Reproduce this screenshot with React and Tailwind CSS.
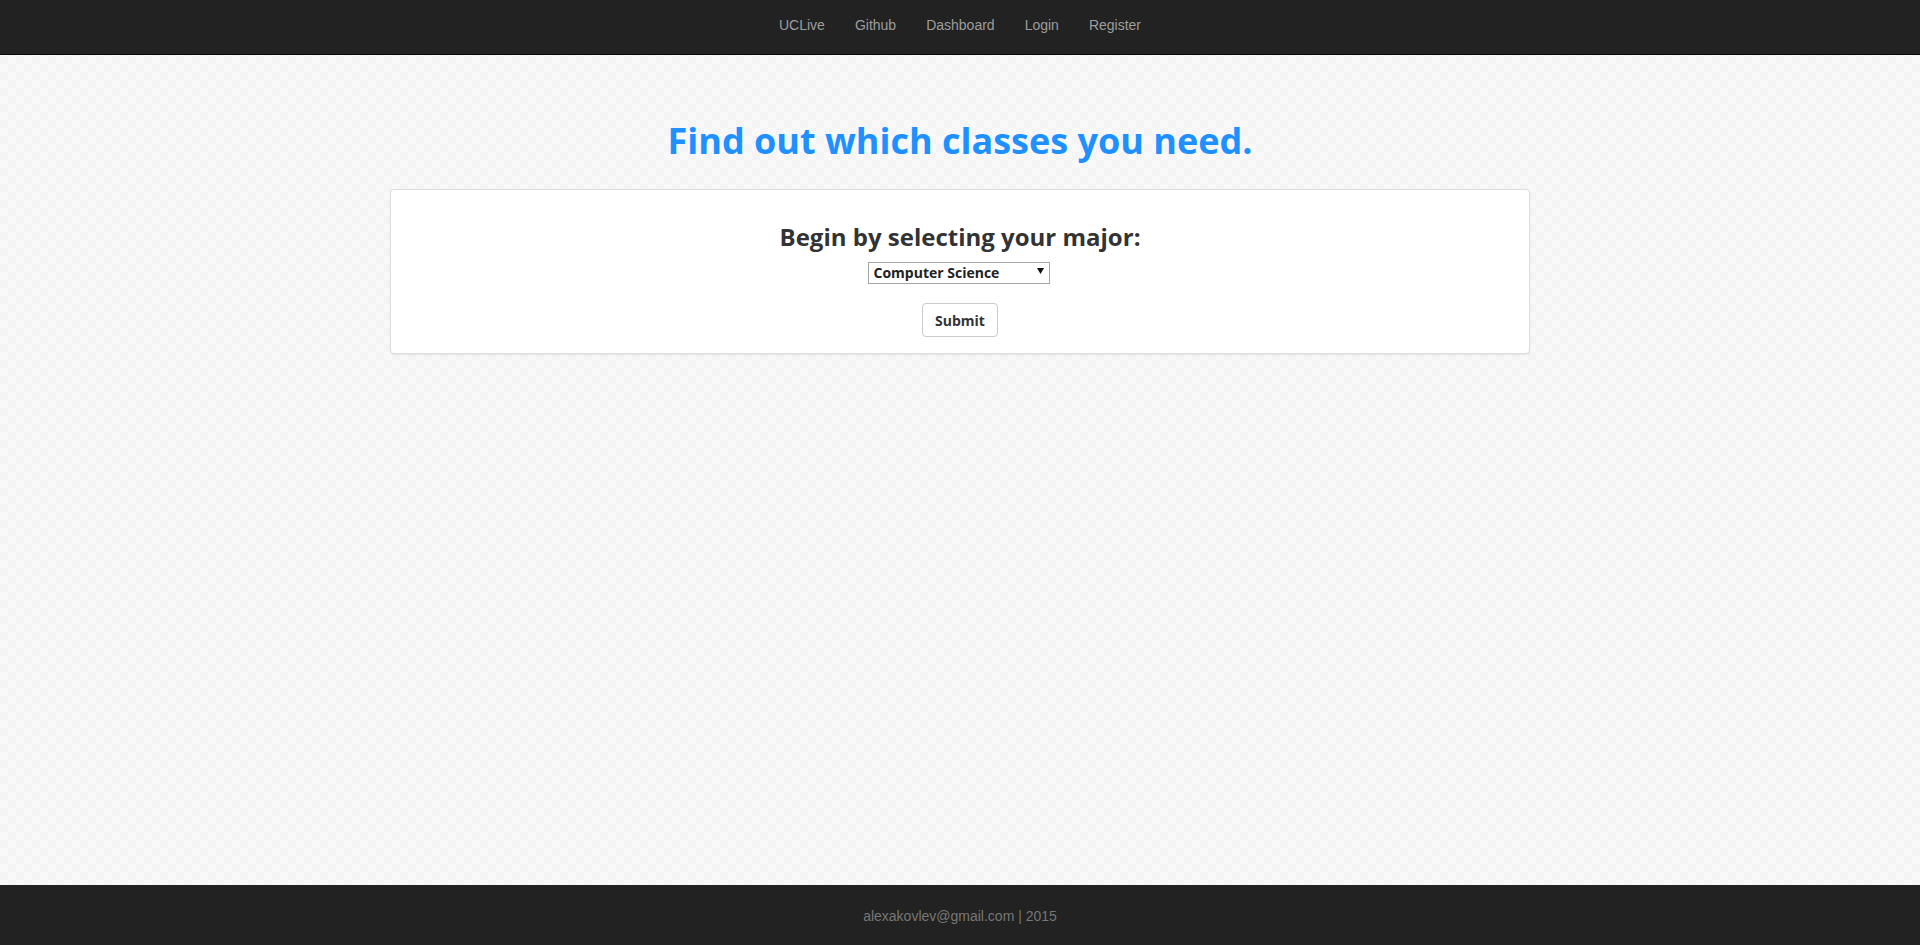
import React from "react";

export default function App() {
  const links = ["UCLive", "Github", "Dashboard", "Login", "Register"];
  return (
    <div className="min-h-screen flex flex-col bg-[#f7f7f7] bg-[image:repeating-conic-gradient(#f4f4f4_0%_25%,#f9f9f9_0%_50%)] bg-[length:16px_16px]">
      <nav className="h-[55px] bg-[#222222] border-b border-[#080808] flex justify-center">
        <ul className="flex items-start font-['Liberation_Sans',Arial,sans-serif] text-[14px] leading-5 text-[#9d9d9d]">
          {links.map((l) => (
            <li key={l}>
              <a href="#" className="block px-[15px] pt-[15px] pb-[15px] hover:text-white">
                {l}
              </a>
            </li>
          ))}
        </ul>
      </nav>

      <main className="flex-1 flex flex-col items-center font-['Open_Sans','Noto_Sans',sans-serif]">
        <h1 className="mt-[66px] mb-[28px] text-[36px] leading-[40px] font-bold text-[#1e90ff] text-center">
          Find out which classes you need.
        </h1>
        <div className="w-[1140px] bg-white border border-[#dddddd] rounded-[4px] shadow-[0_1px_2px_rgba(0,0,0,0.08)] flex flex-col items-center pt-[34px] pb-[16px]">
          <h3 className="text-[24px] leading-[26px] font-bold text-[#333333]">
            Begin by selecting your major:
          </h3>
          <div className="relative mt-[10px] -ml-[3px] w-[182px] h-[22px]">
            <select
              defaultValue="cs"
              className="appearance-none w-full h-full border border-[#a6a6a6] bg-white pl-[5px] pr-5 text-[14px] leading-[20px] font-bold text-[#222222] font-['Open_Sans','Noto_Sans',sans-serif] outline-none"
            >
              <option value="cs">Computer Science</option>
            </select>
            <svg
              className="absolute right-[6px] top-[8px] pointer-events-none"
              width="7"
              height="6"
              viewBox="0 0 7 6"
            >
              <path d="M0 0 H7 L3.5 6 Z" fill="#111" />
            </svg>
          </div>
          <button className="mt-[21px] h-[34px] px-[12px] border border-[#cccccc] rounded-[4px] bg-white text-[14px] font-bold text-[#333333]">
            Submit
          </button>
        </div>
      </main>

      <footer className="h-[60px] bg-[#222222] flex items-center justify-center font-['Liberation_Sans',Arial,sans-serif] text-[14px] leading-5 text-[#777777] pt-[2px]">
        alexakovlev@gmail.com | 2015
      </footer>
    </div>
  );
}
